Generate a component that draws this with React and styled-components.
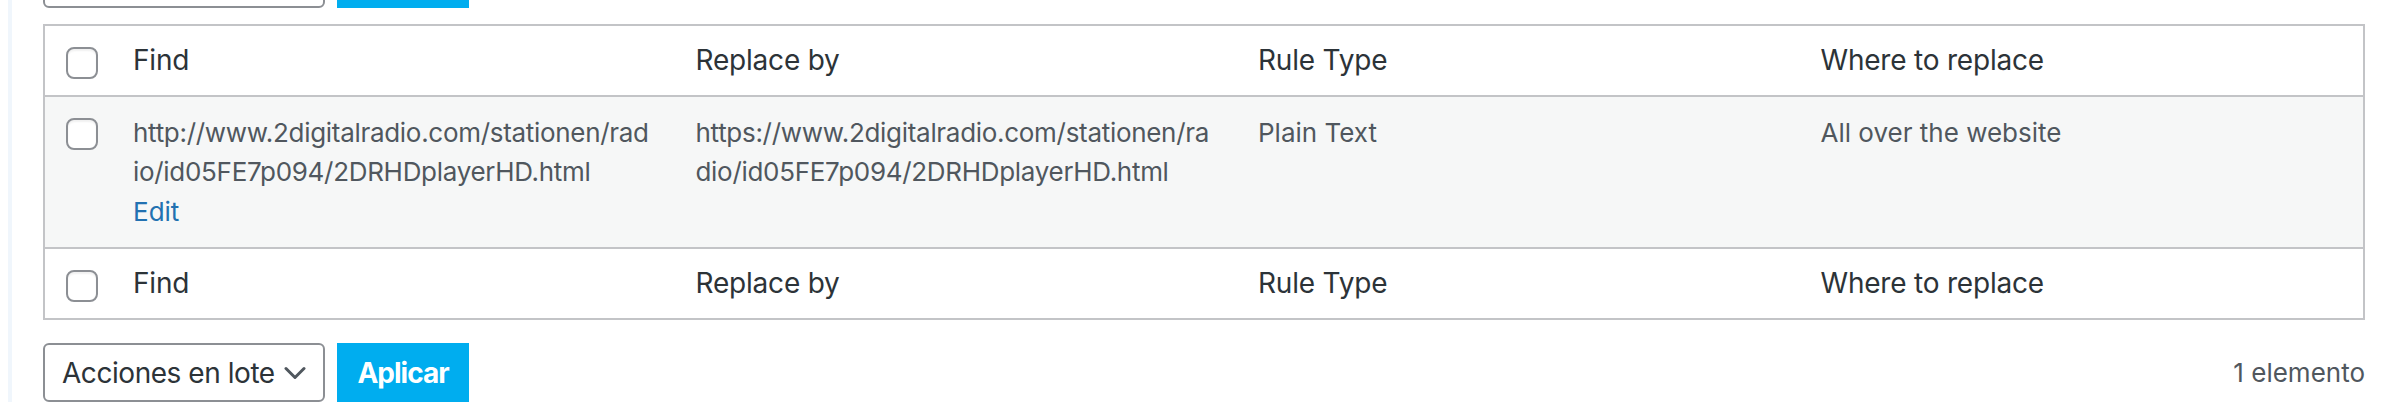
import React from 'react'
import styled, { createGlobalStyle } from 'styled-components'

const colors = {
  heading: '#2c3338',
  text: '#50575e',
  link: '#2271b1',
  border: '#c3c4c7',
  stripe: '#f6f7f7',
  control: '#8c8f94',
  accent: '#00adef',
  edge: '#f0f6fc',
}

const GlobalStyle = createGlobalStyle`
  body {
    margin: 0;
    background: #fff;
    font-family: Inter, "Noto Sans", "Liberation Sans", sans-serif;
    overflow: hidden;
  }
`

const Page = styled.div`
  margin-left: 8px;
  border-left: 4px solid ${colors.edge};
  padding: 0 27px 0 31px;
  min-height: 416px;
  box-sizing: border-box;
`

const TableNav = styled.div`
  display: flex;
  align-items: center;
  gap: 12px;
  height: 59px;
  margin-top: ${p => (p.$top ? '-51px' : '23px')};
  margin-bottom: ${p => (p.$top ? '16px' : '0')};
`

const SelectBox = styled.div`
  box-sizing: border-box;
  width: 282px;
  height: 59px;
  display: flex;
  align-items: center;
  justify-content: space-between;
  padding: 0 17px 0 17px;
  border: 2px solid ${colors.control};
  border-radius: 6px;
  background: #fff;
  color: ${colors.heading};
  font-size: 28px;
  letter-spacing: -0.45px;
`

const ApplyButton = styled.button`
  height: 59px;
  width: 132px;
  border: 0;
  border-radius: 0;
  background: ${colors.accent};
  color: #fff;
  font-family: inherit;
  font-size: 28px;
  font-weight: 700;
  letter-spacing: -1px;
  padding: 0;
`

const Count = styled.span`
  margin-left: auto;
  color: ${colors.text};
  font-size: 26px;
`

const Table = styled.table`
  width: 100%;
  table-layout: fixed;
  border-collapse: separate;
  border-spacing: 0;
  border: 2px solid ${colors.border};

  tbody > tr > *,
  tfoot > tr > * {
    border-top: 2px solid ${colors.border};
  }
`

const Row = styled.tr`
  background: ${p => (p.$striped ? colors.stripe : '#fff')};
`

const HeadCell = styled.th`
  text-align: left;
  font-weight: 400;
  font-size: 28px;
  line-height: 37px;
  letter-spacing: -0.2px;
  color: ${colors.heading};
  padding: 16px 20px;
`

const Cell = styled.td`
  vertical-align: top;
  font-size: 26px;
  line-height: 39px;
  letter-spacing: ${p => (p.$url ? '-0.3px' : '0')};
  color: ${colors.text};
  padding: 16px 20px;
  overflow-wrap: anywhere;
`

const CheckCell = styled.td`
  width: 68px;
  box-sizing: border-box;
  vertical-align: top;
  padding: 21px 0 0 21px;
`

const Checkbox = styled.span`
  display: block;
  box-sizing: border-box;
  width: 32px;
  height: 32px;
  border: 2px solid ${colors.control};
  border-radius: 8px;
  background: #fff;
  box-shadow: inset 0 2px 2px rgba(0, 0, 0, 0.06);
`

const RowActions = styled.div`
  padding-top: 2px;
  line-height: 38px;
  letter-spacing: 0;
`

const EditLink = styled.a`
  color: ${colors.link};
  text-decoration: none;
`

const Chevron = () => (
  <svg width="22" height="14" viewBox="0 0 22 14" fill="none">
    <path d="M2 2.5l9 9 9-9" stroke={colors.text} strokeWidth="3" strokeLinecap="round" strokeLinejoin="round" />
  </svg>
)

const columns = ['Find', 'Replace by', 'Rule Type', 'Where to replace']

const HeaderRow = () => (
  <Row>
    <CheckCell as="th"><Checkbox /></CheckCell>
    {columns.map(c => <HeadCell key={c}>{c}</HeadCell>)}
  </Row>
)

const BulkActions = ({ top, count }) => (
  <TableNav $top={top}>
    <SelectBox>
      <span>Acciones en lote</span>
      <Chevron />
    </SelectBox>
    <ApplyButton>Aplicar</ApplyButton>
    {count && <Count>{count}</Count>}
  </TableNav>
)

const App = () => {
  return (
    <>
      <GlobalStyle />
      <Page>
        <BulkActions top />
        <Table>
          <colgroup>
            <col style={{ width: 68 }} />
            <col />
            <col />
            <col />
            <col />
          </colgroup>
          <thead>
            <HeaderRow />
          </thead>
          <tbody>
            <Row $striped>
              <CheckCell><Checkbox /></CheckCell>
              <Cell $url>
                http://www.2digitalradio.com/stationen/rad<wbr />io/id05FE7p094/2DRHDplayerHD.html
                <RowActions><EditLink href="#">Edit</EditLink></RowActions>
              </Cell>
              <Cell $url>https://www.2digitalradio.com/stationen/ra<wbr />dio/id05FE7p094/2DRHDplayerHD.html</Cell>
              <Cell>Plain Text</Cell>
              <Cell>All over the website</Cell>
            </Row>
          </tbody>
          <tfoot>
            <HeaderRow />
          </tfoot>
        </Table>
        <BulkActions count="1 elemento" />
      </Page>
    </>
  )
}

export default App
